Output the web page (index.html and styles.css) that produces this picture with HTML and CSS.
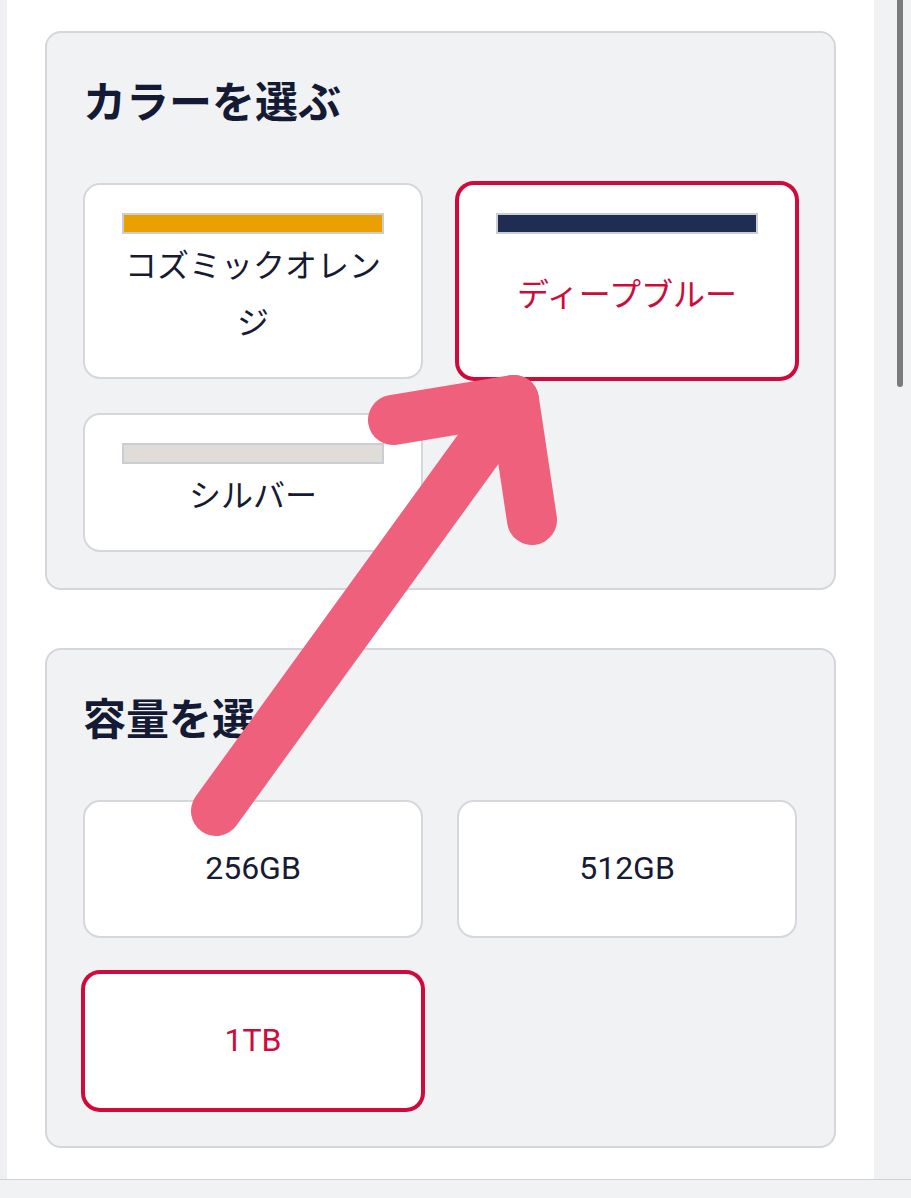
FILE: index.html
```html
<!DOCTYPE html>
<html lang="ja">
<head>
<meta charset="utf-8">
<title>カラーと容量を選ぶ</title>
<link rel="stylesheet" href="styles.css">
</head>
<body>
<div class="window">
  <div class="viewport">
    <div class="edge-left"></div>
    <main class="page">
      <section class="panel">
        <h2 class="panel-title">カラーを選ぶ</h2>
        <div class="options">
          <button class="option color-option">
            <span class="swatch swatch-orange"></span>
            <span class="label">コズミックオレンジ</span>
          </button>
          <button class="option color-option is-selected">
            <span class="swatch swatch-navy"></span>
            <span class="label">ディープブルー</span>
          </button>
          <button class="option color-option">
            <span class="swatch swatch-silver"></span>
            <span class="label">シルバー</span>
          </button>
        </div>
      </section>
      <section class="panel">
        <h2 class="panel-title">容量を選ぶ</h2>
        <div class="options">
          <button class="option size-option">256GB</button>
          <button class="option size-option">512GB</button>
          <button class="option size-option is-selected">1TB</button>
        </div>
      </section>
    </main>
    <div class="rail"><div class="thumb"></div></div>
  </div>
  <div class="statusbar"></div>
</div>
<svg class="annotation" width="911" height="1198" viewBox="0 0 911 1198" aria-hidden="true">
  <g fill="none" stroke="#ee607b" stroke-width="50" stroke-linecap="round" stroke-linejoin="round">
    <path d="M216 811 L514 400"/>
    <path d="M393 420 L514 400 L532 520"/>
  </g>
</svg>
</body>
</html>
```
FILE: styles.css
```css
* { box-sizing: border-box; }

html, body {
  margin: 0;
  padding: 0;
}

body {
  width: 911px;
  height: 1198px;
  overflow: hidden;
  position: relative;
  background: #ffffff;
  font-family: Roboto, "Noto Sans CJK JP", sans-serif;
  color: #161b33;
}

.window {
  display: flex;
  flex-direction: column;
  height: 1198px;
}

.viewport {
  display: flex;
  height: 1179px;
}

.edge-left {
  width: 7px;
  background: #eff0f2;
}

.page {
  flex: 1;
  background: #ffffff;
  padding: 31px 38px 0;
  display: flex;
  flex-direction: column;
  gap: 58px;
}

.rail {
  width: 37px;
  background: #f1f2f4;
  padding-left: 23px;
}

.thumb {
  width: 6px;
  height: 387px;
  background: #7b7b7b;
  border-radius: 0 0 3px 3px;
}

.statusbar {
  flex: 1;
  border-top: 1px solid #cdd0d4;
  background: #f1f2f4;
}

.panel {
  background: #f1f2f4;
  border: 2px solid #d4d6db;
  border-radius: 16px;
  padding: 36px 36px 36px;
}

.panel-title {
  margin: 0 0 54px;
  font-family: "Noto Sans CJK JP", sans-serif;
  font-size: 43px;
  line-height: 60px;
  font-weight: 700;
  color: #141a33;
}

.options {
  display: grid;
  grid-template-columns: 340px 340px;
  column-gap: 34px;
  row-gap: 34px;
}

.option {
  margin: 0;
  background: #ffffff;
  border: 2px solid #d5d7dc;
  border-radius: 17px;
  font-family: Roboto, "Noto Sans CJK JP", sans-serif;
  font-size: 32px;
  line-height: 57px;
  font-weight: 400;
  color: #161b33;
  text-align: center;
}

.option.is-selected {
  border-color: #d00a3b;
  box-shadow: 0 0 0 2px #d00a3b;
  color: #d00a3b;
}

.color-option {
  display: flex;
  flex-direction: column;
  padding: 28px 37px 25px;
}

.swatch {
  display: block;
  height: 21px;
  border: 2px solid #cacdd2;
}

.swatch-orange { background: #e9a000; }
.swatch-navy { background: #202d53; }
.swatch-silver { background: #e0ddd8; }

.label {
  flex: 1;
  display: flex;
  align-items: center;
  justify-content: center;
  padding-top: 4px;
}

.size-option {
  padding: 38px 20px 39px;
}

.annotation {
  position: absolute;
  top: 0;
  left: 0;
  pointer-events: none;
}
```
